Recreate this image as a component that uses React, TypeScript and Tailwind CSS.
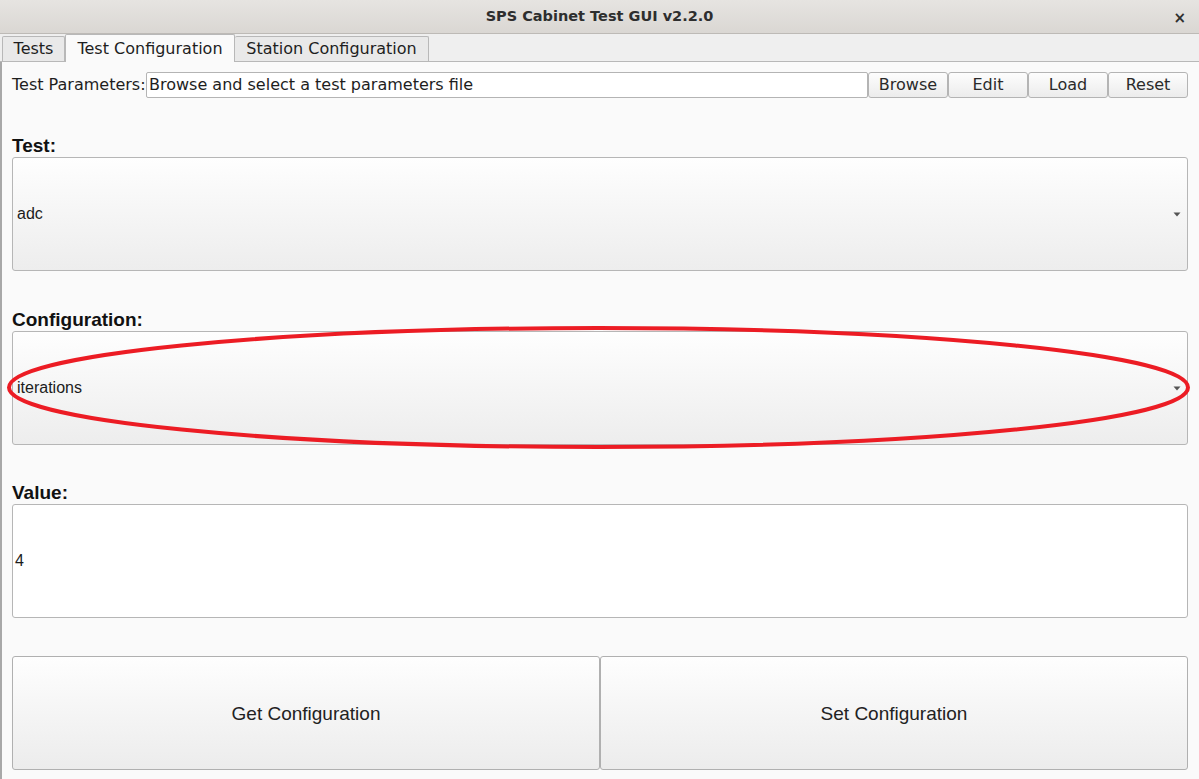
import React from "react";

const dejavu = { fontFamily: '"DejaVu Sans", sans-serif' };
const arial = { fontFamily: '"Liberation Sans", Arial, sans-serif' };

function TopButton({ label }: { label: string }) {
  return (
    <button className="w-[80px] h-[26px] rounded-[3px] border border-[#b4b4b4] bg-gradient-to-b from-[#fdfdfd] to-[#ececec] text-[16px] text-[#2a2a2a] leading-none">
      {label}
    </button>
  );
}

function Combo({ value }: { value: string }) {
  return (
    <div className="h-[114px] rounded-[3px] border border-[#b6b6b6] bg-gradient-to-b from-[#fefefe] to-[#ededed] flex items-center pl-[4px] pr-[6px]">
      <span className="flex-1 text-[16px] text-[#1c1c1c]" style={arial}>{value}</span>
      <svg width="8" height="5" viewBox="0 0 8 5">
        <path d="M0.5 0.5 H7.5 L4 4.5 Z" fill="#555" />
      </svg>
    </div>
  );
}

function Label({ text }: { text: string }) {
  return (
    <div className="h-[20px] leading-[20px] text-[19px] font-bold text-[#111] mb-[1px]" style={arial}>
      {text}
    </div>
  );
}

export default function App() {
  return (
    <div className="relative w-[1199px] h-[779px] overflow-hidden bg-[#fafafa] flex flex-col" style={dejavu}>
      {/* title bar */}
      <div className="h-[34px] shrink-0 flex items-center justify-center relative bg-gradient-to-b from-[#e6e4e1] to-[#dad7d3] border-b border-[#bdbab6]">
        <span className="text-[14.5px] font-bold text-[#2e2e2e]">SPS Cabinet Test GUI v2.2.0</span>
        <span className="absolute right-[13px] top-[7px] text-[15px] font-bold text-[#2e2e2e]">×</span>
      </div>

      {/* tabs */}
      <div className="h-[28px] shrink-0 bg-[#efefef] border-b border-[#b8b8b8] flex items-end pl-[2px] text-[16px] text-[#1e1e1e]">
        <div className="w-[63px] h-[25px] border border-b-0 border-[#b8b8b8] bg-[#e9e9e9] flex items-center justify-center rounded-t-[2px]">Tests</div>
        <div className="w-[170px] h-[28px] -mb-[1px] border border-b-0 border-[#b8b8b8] bg-[#fafafa] flex items-center justify-center rounded-t-[2px]">Test Configuration</div>
        <div className="w-[194px] h-[25px] border border-b-0 border-l-0 border-[#b8b8b8] bg-[#e9e9e9] flex items-center justify-center rounded-t-[2px]">Station Configuration</div>
      </div>

      {/* body */}
      <div className="flex-1 border-l-2 border-[#a8a8a8] pl-[10px] pr-[11px]">
        <div className="mt-[10px] flex items-center h-[26px]">
          <span className="w-[134px] text-[16px] text-[#1e1e1e] whitespace-nowrap">Test Parameters:</span>
          <div className="flex-1 h-[26px] border border-[#b4b4b4] rounded-[2px] bg-white flex items-center pl-[2px] text-[16px] text-[#1e1e1e]">
            Browse and select a test parameters file
          </div>
          <TopButton label="Browse" />
          <TopButton label="Edit" />
          <TopButton label="Load" />
          <TopButton label="Reset" />
        </div>

        <div className="mt-[38px]">
          <Label text="Test:" />
          <Combo value="adc" />
        </div>

        <div className="mt-[39px]">
          <Label text="Configuration:" />
          <Combo value="iterations" />
        </div>

        <div className="mt-[38px]">
          <Label text="Value:" />
          <div className="h-[114px] rounded-[3px] border border-[#b6b6b6] bg-white flex items-center pl-[2px] text-[16px] text-[#1c1c1c]" style={arial}>
            4
          </div>
        </div>

        <div className="mt-[38px] flex h-[114px] text-[19px] text-[#222]" style={arial}>
          <button className="w-[588px] h-full pt-[3px] rounded-[3px] border border-[#b0b0b0] bg-gradient-to-b from-[#fefefe] to-[#ececec]">Get Configuration</button>
          <button className="flex-1 h-full pt-[3px] rounded-[3px] border border-[#b0b0b0] bg-gradient-to-b from-[#fefefe] to-[#ececec]">Set Configuration</button>
        </div>
      </div>

      {/* red annotation ellipse */}
      <svg className="absolute left-0 top-0 pointer-events-none" width="1199" height="779">
        <ellipse cx="598.5" cy="387.5" rx="589.5" ry="59.5" fill="none" stroke="#ec1c24" strokeWidth="4" />
      </svg>
    </div>
  );
}
